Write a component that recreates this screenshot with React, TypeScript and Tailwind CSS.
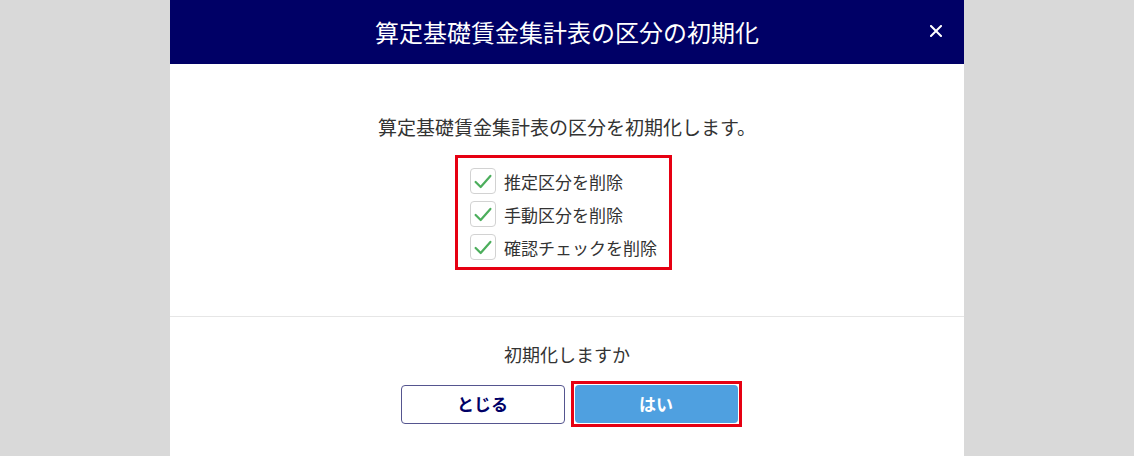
import { useState } from "react";

const items = [
  { id: 1, label: "推定区分を削除" },
  { id: 2, label: "手動区分を削除" },
  { id: 3, label: "確認チェックを削除" },
];

const CheckBox = ({ checked }: { checked: boolean }) => (
  <span className="flex h-[26px] w-[26px] shrink-0 items-center justify-center rounded-[4px] border border-[#d2d2d2] bg-white">
    {checked && (
      <svg width="26" height="26" viewBox="0 0 26 26">
        <polyline
          points="5,14 10.5,19.5 21,7.5"
          fill="none"
          stroke="#4cae5c"
          strokeWidth="2.4"
          strokeLinecap="round"
          strokeLinejoin="round"
        />
      </svg>
    )}
  </span>
);

export default function App() {
  const [checked, setChecked] = useState<number[]>([1, 2, 3]);

  const toggle = (id: number) =>
    setChecked((c) => (c.includes(id) ? c.filter((x) => x !== id) : [...c, id]));

  return (
    <div
      className="flex h-[456px] w-full justify-center overflow-hidden bg-[#d9d9d9] text-[#333]"
      style={{ fontFamily: '"Noto Sans CJK JP", "Noto Sans", sans-serif' }}
    >
      <div className="flex h-[520px] w-[794px] shrink-0 flex-col bg-white">
        <div className="relative flex h-16 items-center justify-center bg-[#000066]">
          <h1 className="text-[24px] leading-none text-white">算定基礎賃金集計表の区分の初期化</h1>
          <button className="absolute right-[22px] top-[25px] flex h-3 w-3 items-center justify-center">
            <svg width="12" height="12" viewBox="0 0 12 12">
              <path d="M1 1L11 11M11 1L1 11" stroke="white" strokeWidth="2" strokeLinecap="square" />
            </svg>
          </button>
        </div>

        <div className="flex flex-col items-center pb-[46px] pt-[50px]">
          <p className="text-[19px] leading-[26px]">算定基礎賃金集計表の区分を初期化します。</p>
          <div className="mr-[7px] mt-[15px] flex w-[217px] flex-col gap-[7px] border-[3px] border-[#e60012] pb-[7px] pl-3 pt-[10px]">
            {items.map((item) => (
              <label key={item.id} className="flex cursor-pointer items-center gap-[8px]" onClick={() => toggle(item.id)}>
                <CheckBox checked={checked.includes(item.id)} />
                <span className="text-[17px] leading-none">{item.label}</span>
              </label>
            ))}
          </div>
        </div>

        <div className="h-px bg-[#e6e6e6]" />

        <div className="flex flex-col items-center pt-6">
          <p className="text-[18px] leading-[26px]">初期化しますか</p>
          <div className="mt-[14px] flex items-center gap-[6px] pl-2">
            <button className="h-[39px] w-[164px] rounded-[4px] border border-[#55558f] bg-white text-[17px] font-bold text-[#000066]">
              とじる
            </button>
            <div className="border-[3px] border-[#e60012] p-px">
              <button className="h-[38px] w-[163px] rounded-[4px] bg-[#4fa0e0] text-[17px] font-bold text-white">
                はい
              </button>
            </div>
          </div>
        </div>
      </div>
    </div>
  );
}
